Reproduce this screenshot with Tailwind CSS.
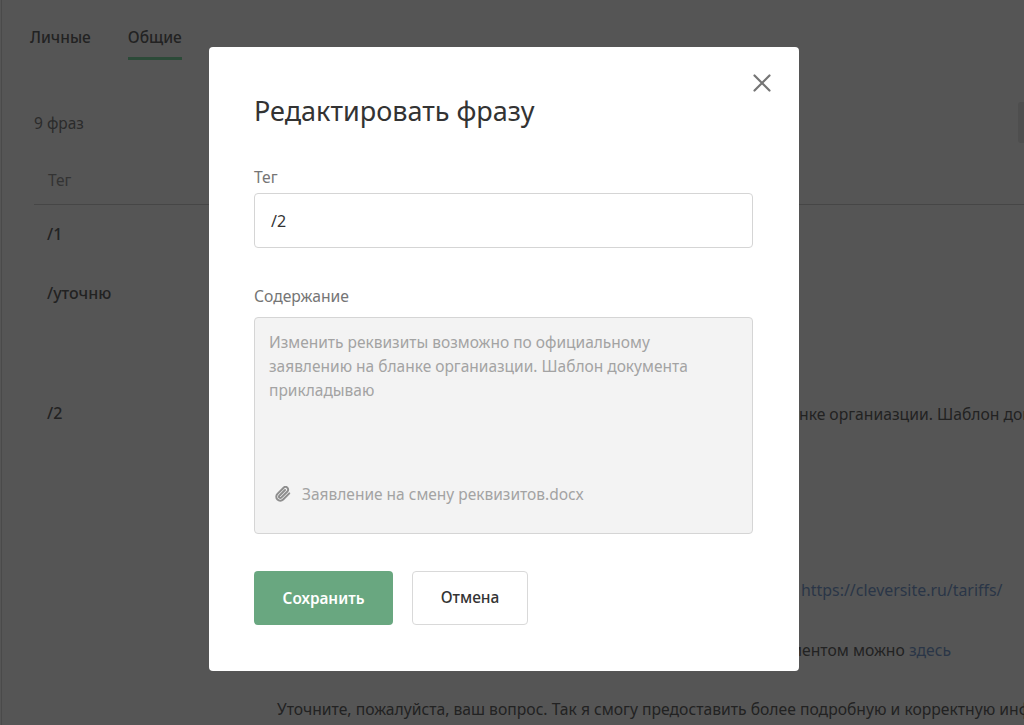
<!DOCTYPE html>
<html lang="ru">
<head>
<meta charset="utf-8">
<script src="https://cdn.jsdelivr.net/npm/@tailwindcss/browser@4"></script>
<title>Редактировать фразу</title>
</head>
<body class="m-0 overflow-hidden bg-[#555555] font-['Noto_Sans','Open_Sans',sans-serif]">
<div class="relative h-[725px] w-[1024px] overflow-hidden">
  <!-- page behind the overlay -->
  <div class="ml-[1px] h-full border-l border-[#4a4a4a] pl-[28px] text-[#222222]">
    <div class="flex gap-[37px] pt-[27px] text-[15.5px] font-medium">
      <div class="leading-[20px]">Личные</div>
      <div class="h-[33px] border-b-[3px] border-[#2c4a38] leading-[20px]">Общие</div>
    </div>
    <div class="ml-[4px] mt-[53px] text-[15.5px] leading-[20px] text-[#2b2b2b]">9 фраз</div>
    <div class="ml-[4px] mt-[36px] h-[36px] w-[1000px] border-b border-[#464646] pl-[14px] text-[15.5px] leading-[22px] text-[#333333]">Тег</div>
    <div class="ml-[17px] mt-[19px] text-[16px] font-medium leading-[20px]">/1</div>
    <div class="ml-[17px] mt-[39px] text-[16px] font-medium leading-[20px]">/уточню</div>
    <div class="ml-[17px] mt-[100px] text-[16px] font-medium leading-[20px]">/2</div>
  </div>
  <div class="absolute left-[799px] top-[404px] whitespace-nowrap text-[15.7px] leading-[20px] text-[#222222]">нке органиазции. Шаблон документа</div>
  <a class="absolute left-[801px] top-[580px] whitespace-nowrap text-[15.9px] leading-[20px] text-[#2a3547]">https://cleversite.ru/tariffs/</a>
  <div class="absolute left-[790px] top-[640px] whitespace-nowrap text-[15.7px] leading-[20px] text-[#222222]">ментом можно <span class="text-[#2a3547]">здесь</span></div>
  <div class="absolute left-[277px] top-[699px] whitespace-nowrap text-[15.7px] leading-[20px] text-[#222222]">Уточните, пожалуйста, ваш вопрос. Так я смогу предоставить более подробную и корректную информацию</div>
  <div class="absolute left-[1018px] top-[102px] h-[41px] w-[10px] rounded-[3px] bg-[#4e4e4e]"></div>

  <!-- modal -->
  <div class="absolute left-[209px] top-[47px] h-[624px] w-[590px] rounded-[4px] bg-white px-[45px] pt-[47px]">
    <svg class="absolute left-[543px] top-[26px] h-[20px] w-[20px]" viewBox="0 0 20 20" fill="none" stroke="#757575" stroke-width="2.2" stroke-linecap="round"><path d="M2.5 2.5 17.5 17.5M17.5 2.5 2.5 17.5"/></svg>
    <h1 class="text-[27px] font-normal leading-[34px] text-[#333333]">Редактировать фразу</h1>
    <label class="mt-[39px] block text-[15.7px] leading-[20px] text-[#757575]">Тег</label>
    <div class="mt-[6px] flex h-[55px] w-[499px] items-center rounded-[4px] border border-[#d5d5d5] pl-[16px] text-[16px] text-[#333333]">/2</div>
    <label class="mt-[38px] block text-[15.7px] leading-[20px] text-[#757575]">Содержание</label>
    <div class="mt-[11px] flex h-[217px] w-[499px] flex-col rounded-[4px] border border-[#d5d5d5] bg-[#f3f3f3] pl-[14px] pr-[16px] pt-[12px] text-[15.5px] leading-[24px] text-[#a3a3a3]">
      <p class="h-[143px]">Изменить реквизиты возможно по официальному заявлению на бланке органиазции. Шаблон документа прикладываю</p>
      <div class="mt-[9px] flex items-center gap-[11px] pl-[6px]">
        <svg class="h-[16px] w-[16px] shrink-0" viewBox="0 0 24 24" fill="none" stroke="#8e8e8e" stroke-width="3" stroke-linecap="round" stroke-linejoin="round"><path d="M21.4 11.05l-9.2 9.2a6 6 0 0 1-8.5-8.5l9.2-9.2a4 4 0 0 1 5.66 5.66l-9.2 9.2a2 2 0 0 1-2.83-2.83l8.5-8.49"/></svg>
        <span>Заявление на смену реквизитов.docx</span>
      </div>
    </div>
    <div class="mt-[37px] flex gap-[19px]">
      <button class="h-[54px] w-[139px] rounded-[4px] bg-[#69a780] text-[15.3px] font-semibold text-white">Сохранить</button>
      <button class="h-[54px] w-[116px] rounded-[4px] border border-[#d9d9d9] bg-white text-[15.5px] font-medium text-[#333333]">Отмена</button>
    </div>
  </div>
</div>
</body>
</html>
